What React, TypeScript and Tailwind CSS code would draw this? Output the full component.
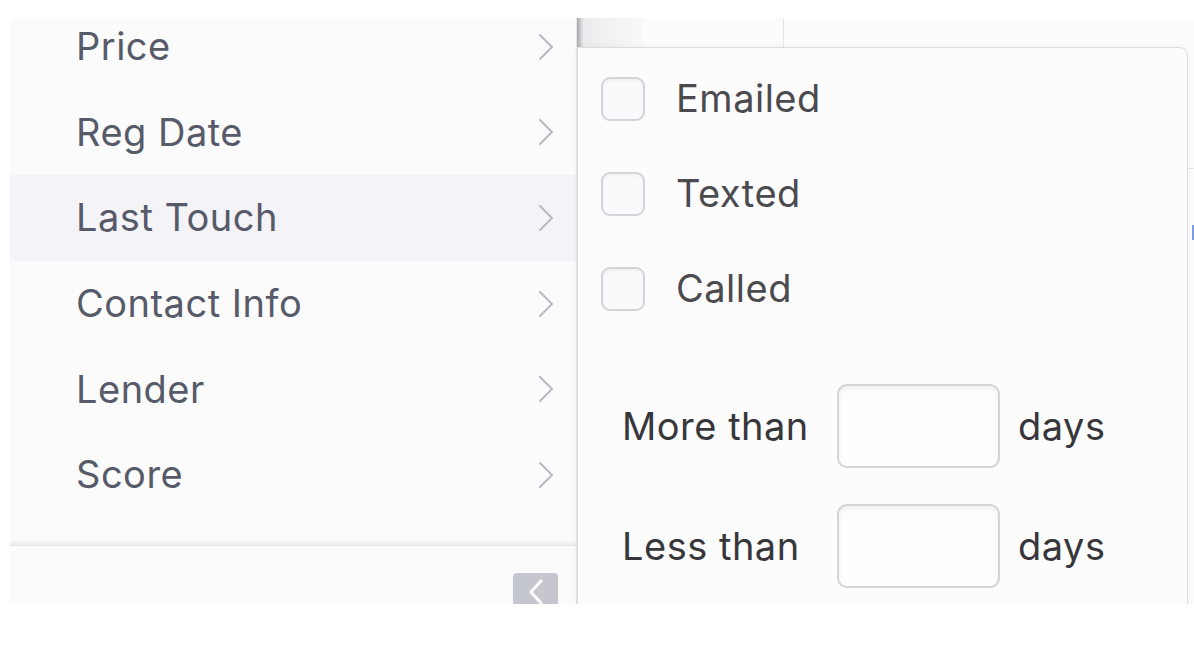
const menuItems = ['Price', 'Reg Date', 'Last Touch', 'Contact Info', 'Lender', 'Score'];

const ChevronRight = () => (
  <svg width="16" height="28" viewBox="0 0 16 28" fill="none">
    <polyline points="2,2 14,14 2,26" stroke="#b9bac0" strokeWidth="2" strokeLinecap="round" strokeLinejoin="round" />
  </svg>
);

const Checkbox = ({ label }: { label: string }) => (
  <div className="flex items-center h-[95px]">
    <div className="w-[44px] h-[44px] rounded-[9px] border-2 border-[#d3d3d8] bg-[#fafafc] shadow-[inset_0_2px_3px_rgba(0,0,0,0.04)]" />
    <span className="ml-[31px] text-[38px] text-[#4b4b4f]">{label}</span>
  </div>
);

const DaysRow = ({ label }: { label: string }) => (
  <div className="flex items-center h-[120px]">
    <span className="w-[215px] text-[38px] text-[#37373b]">{label}</span>
    <div className="w-[163px] h-[84px] rounded-[10px] border-2 border-[#d4d4d8] bg-[#fdfdfe] shadow-[inset_0_3px_5px_rgba(0,0,0,0.05)]" />
    <span className="ml-[18px] text-[38px] text-[#37373b]">days</span>
  </div>
);

export default function App() {
  return (
    <div className="w-[1194px] h-[662px] bg-white overflow-hidden tracking-[0.5px] font-['Inter','Liberation_Sans',sans-serif]">
      <div className="mt-[18px] ml-[10px] h-[586px] flex overflow-hidden">
        {/* Left menu */}
        <div className="w-[566px] shrink-0 flex flex-col bg-[#fbfbfc]">
          <div className="h-[522px] overflow-hidden">
            <div className="-mt-[14px]">
              {menuItems.map((item) => (
                <div
                  key={item}
                  className={`h-[85.6px] flex items-center justify-between pl-[66px] pr-[22px] ${
                    item === 'Last Touch' ? 'bg-[#f3f3f8]' : ''
                  }`}
                >
                  <span className="text-[38px] text-[#575a69]">{item}</span>
                  <ChevronRight />
                </div>
              ))}
            </div>
          </div>
          <div className="h-[5px] bg-gradient-to-b from-[#fbfbfc] to-[#ececee]" />
          <div className="h-[1px] bg-[#e4e4e6]" />
          <div className="flex-1 flex justify-end items-end pr-[18px]">
            <div className="w-[45px] h-[31px] rounded-t-[4px] bg-[#c5c7cf] flex items-start justify-center pt-[6px]">
              <svg width="14" height="26" viewBox="0 0 14 26" fill="none">
                <polyline points="12,2 2,13 12,24" stroke="#ffffff" strokeWidth="3" strokeLinecap="round" strokeLinejoin="round" />
              </svg>
            </div>
          </div>
        </div>

        {/* Right area */}
        <div className="relative flex-1 bg-[#fcfcfc] border-l border-[#e6e6e8]">
          <div className="h-[29px] flex">
            <div className="w-[66px] bg-gradient-to-r from-[#a9a9ad] via-[#ececef] via-[10%] to-[#f9f9fb]" />
            <div className="w-[141px] border-r border-[#e4e4e6]" />
          </div>
          <div className="absolute right-0 top-[150px] w-[6px] h-[1px] bg-[#e4e4e6]" />
          <div className="absolute right-0 top-[207px] w-[2px] h-[15px] bg-[#7b9be0]" />

          {/* Popover */}
          <div className="absolute left-0 top-[29px] w-[611px] h-[600px] bg-[#fcfcfc] border border-[#dcdcdf] rounded-tr-[9px] shadow-[0_0_6px_rgba(0,0,0,0.06)]">
            <div className="pl-[23px] mt-[3px]">
              <Checkbox label="Emailed" />
              <Checkbox label="Texted" />
              <Checkbox label="Called" />
            </div>
            <div className="pl-[44px] mt-[30px]">
              <DaysRow label="More than" />
              <DaysRow label="Less than" />
            </div>
          </div>
        </div>
      </div>
    </div>
  );
}
